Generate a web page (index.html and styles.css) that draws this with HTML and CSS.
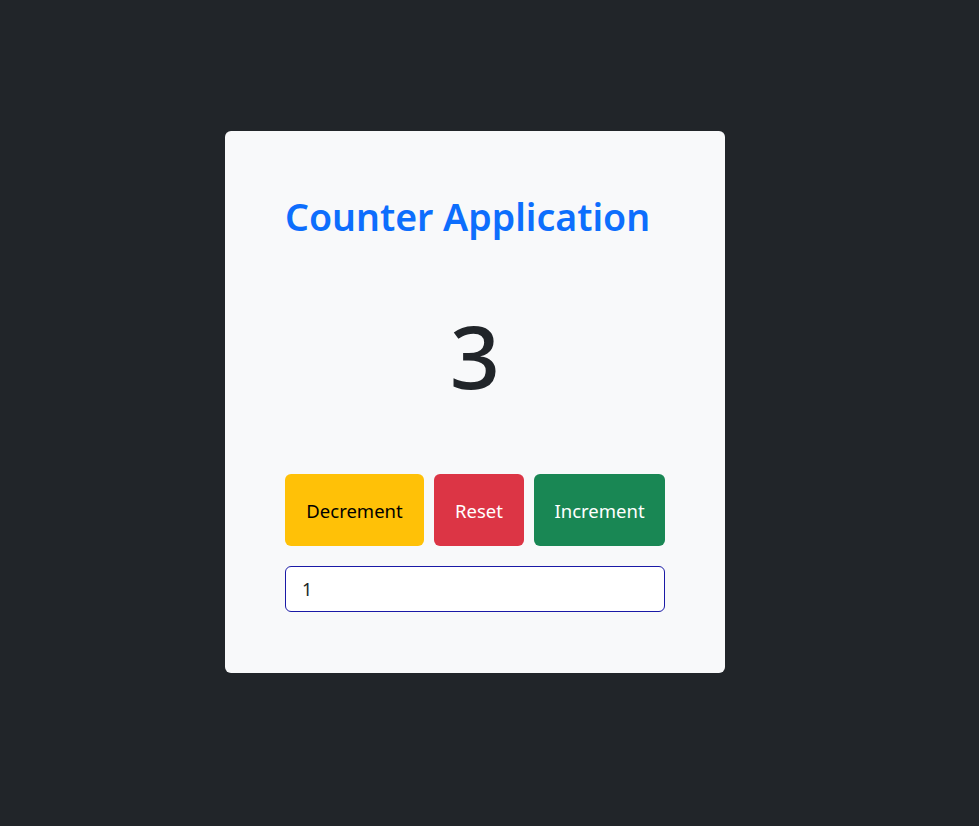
FILE: index.html
```html
<!DOCTYPE html>
<html lang="en">
<head>
<meta charset="utf-8">
<title>Counter Application</title>
<link rel="stylesheet" href="styles.css">
</head>
<body>
<main class="page">
  <section class="card">
    <h1 class="title">Counter Application</h1>
    <div class="count">3</div>
    <div class="actions">
      <button class="btn btn-warning" type="button">Decrement</button>
      <button class="btn btn-danger" type="button">Reset</button>
      <button class="btn btn-success" type="button">Increment</button>
    </div>
    <input class="step" type="text" value="1">
  </section>
</main>
</body>
</html>
```

FILE: styles.css
```css
* { box-sizing: border-box; }
html, body { margin: 0; padding: 0; }
body {
  background: #212529;
  font-family: "Noto Sans", "Open Sans", sans-serif;
  color: #212529;
  min-height: 826px;
}
.page {
  display: flex;
  justify-content: center;
  padding: 131px 29px 0 0;
}
.card {
  width: 500px;
  background: #f8f9fa;
  border-radius: 6px;
  padding: 62px 60px 61px;
  display: flex;
  flex-direction: column;
}
.title {
  margin: 0;
  font-size: 37.5px;
  font-weight: 600;
  line-height: 48px;
  color: #0d6efd;
}
.count {
  margin: 57px 0 61px;
  text-align: center;
  font-size: 88px;
  line-height: 115px;
  font-weight: 500;
  color: #212529;
}
.actions {
  display: grid;
  grid-template-columns: 139fr 90fr 131fr;
  gap: 10px;
  height: 72px;
}
.btn {
  border: none;
  border-radius: 6px;
  font-family: inherit;
  font-size: 18.5px;
  padding: 0;
  cursor: pointer;
}
.btn-warning { background: #ffc107; color: #000; }
.btn-danger { background: #dc3545; color: #fff; }
.btn-success { background: #198754; color: #fff; }
.step {
  margin-top: 20px;
  height: 46px;
  width: 100%;
  border: 1px solid #1a1aa6;
  border-radius: 6px;
  background: #fff;
  padding: 0 16px;
  font-family: inherit;
  font-size: 18px;
  color: #212529;
  outline: none;
}
```
